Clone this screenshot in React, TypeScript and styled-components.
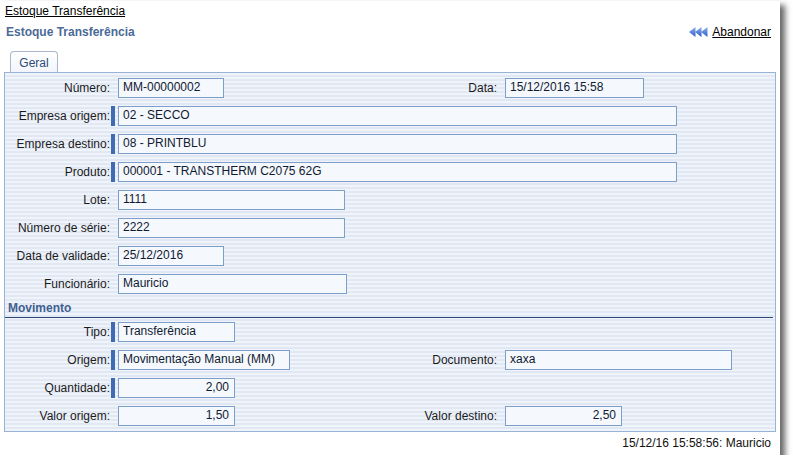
import React from "react"
import styled, { createGlobalStyle } from "styled-components"

const GlobalStyle = createGlobalStyle`
  html, body {
    margin: 0;
    padding: 0;
    background: #ffffff;
  }
  body {
    font-family: "Liberation Sans", Arial, sans-serif;
    font-size: 12px;
    color: #111;
  }
`

const Card = styled.div`
  width: 780px;
  height: 454px;
  margin-top: 1px;
  background: #fff;
  box-shadow: 4px 5px 6px 1px rgba(0, 0, 0, 0.6);
  display: flex;
  flex-direction: column;
`

const Breadcrumb = styled.a`
  align-self: flex-start;
  margin: 3px 0 0 5px;
  line-height: 14px;
  color: #000;
  text-decoration: underline;
  cursor: pointer;
`

const TitleBar = styled.div`
  display: flex;
  align-items: center;
  justify-content: space-between;
  margin-top: 5px;
  padding: 0 9px 0 6px;
  height: 18px;
`

const Title = styled.h1`
  margin: 0;
  font-size: 12px;
  font-weight: bold;
  color: #4b6a98;
`

const BackLink = styled.a`
  display: flex;
  align-items: center;
  gap: 4px;
  color: #000;
  text-decoration: underline;
  cursor: pointer;
`

const Tabs = styled.div`
  display: flex;
  margin: 10px 0 0 10px;
`

const Tab = styled.div`
  height: 21px;
  width: 48px;
  box-sizing: border-box;
  padding-top: 1px;
  display: flex;
  align-items: center;
  justify-content: center;
  border: 1px solid #a9b8cc;
  border-bottom: none;
  border-radius: 4px 4px 0 0;
  background: linear-gradient(#ffffff, #f2f5fa);
  color: #2e4b78;
`

const Panel = styled.div`
  margin: 0 4px;
  border: 1px solid #98b3d6;
  padding: 5px 0 5px;
  display: flex;
  flex-direction: column;
  gap: 8px;
  background: repeating-linear-gradient(
    to bottom,
    #eff3fa 0px,
    #eff3fa 2px,
    #e1e8f4 2px,
    #e1e8f4 4px
  );
`

const Row = styled.div`
  display: flex;
  height: 20px;
`

const Field = styled.div<{ $width?: number }>`
  display: flex;
  align-items: stretch;
  ${(p) => (p.$width ? `width: ${p.$width}px; flex: none;` : "")}
`

const Label = styled.label<{ $width: number }>`
  width: ${(p) => p.$width}px;
  flex: none;
  text-align: right;
  line-height: 20px;
  white-space: nowrap;
  color: #1b1b1b;
`

const Marker = styled.span<{ $on?: boolean }>`
  width: 4px;
  margin: 0 3px 0 1px;
  flex: none;
  background: ${(p) => (p.$on ? "#3f6cb2" : "transparent")};
`

const Input = styled.div<{ $width: number; $right?: boolean }>`
  width: ${(p) => p.$width}px;
  box-sizing: border-box;
  border: 1px solid #7b9fc9;
  background: #f5f8fc;
  padding: 1px 5px 0 4px;
  line-height: 15px;
  color: #101a33;
  text-align: ${(p) => (p.$right ? "right" : "left")};
  white-space: nowrap;
  overflow: hidden;
`

const Section = styled.div`
  height: 20px;
  box-sizing: border-box;
  margin: -4px 2px -4px 0;
  padding: 4px 0 0 3px;
  border-bottom: 1px solid #2d4a77;
  font-weight: bold;
  color: #3f5f90;
  line-height: 12px;
`

const Footer = styled.div`
  text-align: right;
  padding: 4px 9px 0 0;
  line-height: 14px;
  color: #111;
`

const RewindIcon = () => (
  <svg width="19" height="10" viewBox="0 0 19 10">
    <defs>
      <linearGradient id="rw" x1="0" y1="0" x2="0" y2="1">
        <stop offset="0" stopColor="#8fb2ee" />
        <stop offset="1" stopColor="#2a5cc4" />
      </linearGradient>
    </defs>
    <polygon points="0,5 6.5,0 6.5,10" fill="url(#rw)" />
    <polygon points="6,5 12.5,0 12.5,10" fill="url(#rw)" />
    <polygon points="12,5 18.5,0 18.5,10" fill="url(#rw)" />
  </svg>
)

type F = {
  label: string
  value: string
  width: number
  required?: boolean
  right?: boolean
}

const FormField = ({
  f,
  labelWidth,
  boxWidth,
}: {
  f: F
  labelWidth: number
  boxWidth?: number
}) => (
  <Field $width={boxWidth}>
    <Label $width={labelWidth}>{f.label}:</Label>
    <Marker $on={f.required} />
    <Input $width={f.width} $right={f.right}>
      {f.value}
    </Input>
  </Field>
)

type RowDef = [F, F?]

const general: RowDef[] = [
  [
    { label: "Número", value: "MM-00000002", width: 106 },
    { label: "Data", value: "15/12/2016 15:58", width: 139 },
  ],
  [{ label: "Empresa origem", value: "02 - SECCO", width: 559, required: true }],
  [{ label: "Empresa destino", value: "08 - PRINTBLU", width: 559, required: true }],
  [
    {
      label: "Produto",
      value: "000001 - TRANSTHERM C2075 62G",
      width: 559,
      required: true,
    },
  ],
  [{ label: "Lote", value: "1111", width: 227 }],
  [{ label: "Número de série", value: "2222", width: 227 }],
  [{ label: "Data de validade", value: "25/12/2016", width: 106 }],
  [{ label: "Funcionário", value: "Mauricio", width: 229 }],
]

const movement: RowDef[] = [
  [{ label: "Tipo", value: "Transferência", width: 117, required: true }],
  [
    { label: "Origem", value: "Movimentação Manual (MM)", width: 172, required: true },
    { label: "Documento", value: "xaxa", width: 227 },
  ],
  [{ label: "Quantidade", value: "2,00", width: 117, required: true, right: true }],
  [
    { label: "Valor origem", value: "1,50", width: 117, right: true },
    { label: "Valor destino", value: "2,50", width: 117, right: true },
  ],
]

const renderRows = (rows: RowDef[]) =>
  rows.map(([a, b]) => (
    <Row key={a.label}>
      <FormField f={a} labelWidth={105} boxWidth={b ? 387 : undefined} />
      {b && <FormField f={b} labelWidth={105} />}
    </Row>
  ))

const App = () => (
  <>
    <GlobalStyle />
    <Card>
      <Breadcrumb>Estoque Transferência</Breadcrumb>
      <TitleBar>
        <Title>Estoque Transferência</Title>
        <BackLink>
          <RewindIcon />
          Abandonar
        </BackLink>
      </TitleBar>
      <Tabs>
        <Tab>Geral</Tab>
      </Tabs>
      <Panel>
        {renderRows(general)}
        <Section>Movimento</Section>
        {renderRows(movement)}
      </Panel>
      <Footer>15/12/16 15:58:56: Mauricio</Footer>
    </Card>
  </>
)

export default App
